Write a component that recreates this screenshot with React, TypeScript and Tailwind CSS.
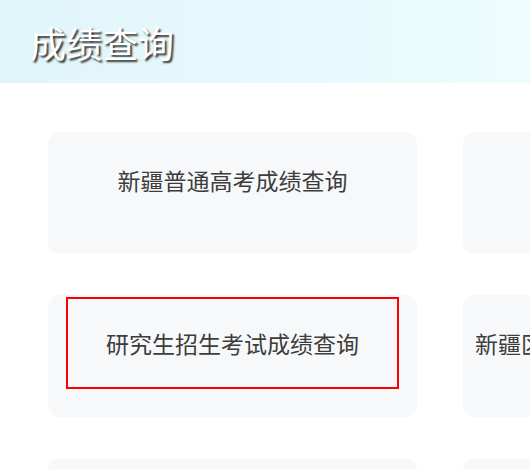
const items = [
  { title: '新疆普通高考成绩查询', active: false },
  { title: '', active: false },
  { title: '研究生招生考试成绩查询', active: true },
  { title: '新疆区初中学业水平考试成绩查询', active: false },
  { title: '', active: false },
  { title: '', active: false },
]

function QueryCard({ title, active }: { title: string; active: boolean }) {
  return (
    <div className="h-[122px] rounded-xl bg-[#f7f8fa] pt-[2px]">
      <a
        href="#"
        className={
          'mx-[18px] flex h-[92px] items-center justify-center whitespace-nowrap text-[23px] text-[#3d3d3d] ' +
          (active ? 'border-2 border-[#ff0000]' : 'border-2 border-transparent')
        }
      >
        {title}
      </a>
    </div>
  )
}

export default function App() {
  return (
    <div className="h-[470px] w-[530px] overflow-hidden bg-white font-['Noto_Sans_CJK_SC','Microsoft_YaHei',sans-serif]">
      <header className="flex h-[83px] items-center bg-gradient-to-r from-[#e0f5fa] to-[#edfdff] pl-[30px]">
        <h1 className="text-[36px] leading-none text-white [text-shadow:2px_2px_2px_#333]">
          成绩查询
        </h1>
      </header>
      <div className="grid w-[830px] grid-cols-[369px_369px] gap-x-[46px] gap-y-[41px] pl-[48px] pt-[49px]">
        {items.map((item, i) => (
          <QueryCard key={i} title={item.title} active={item.active} />
        ))}
      </div>
    </div>
  )
}
